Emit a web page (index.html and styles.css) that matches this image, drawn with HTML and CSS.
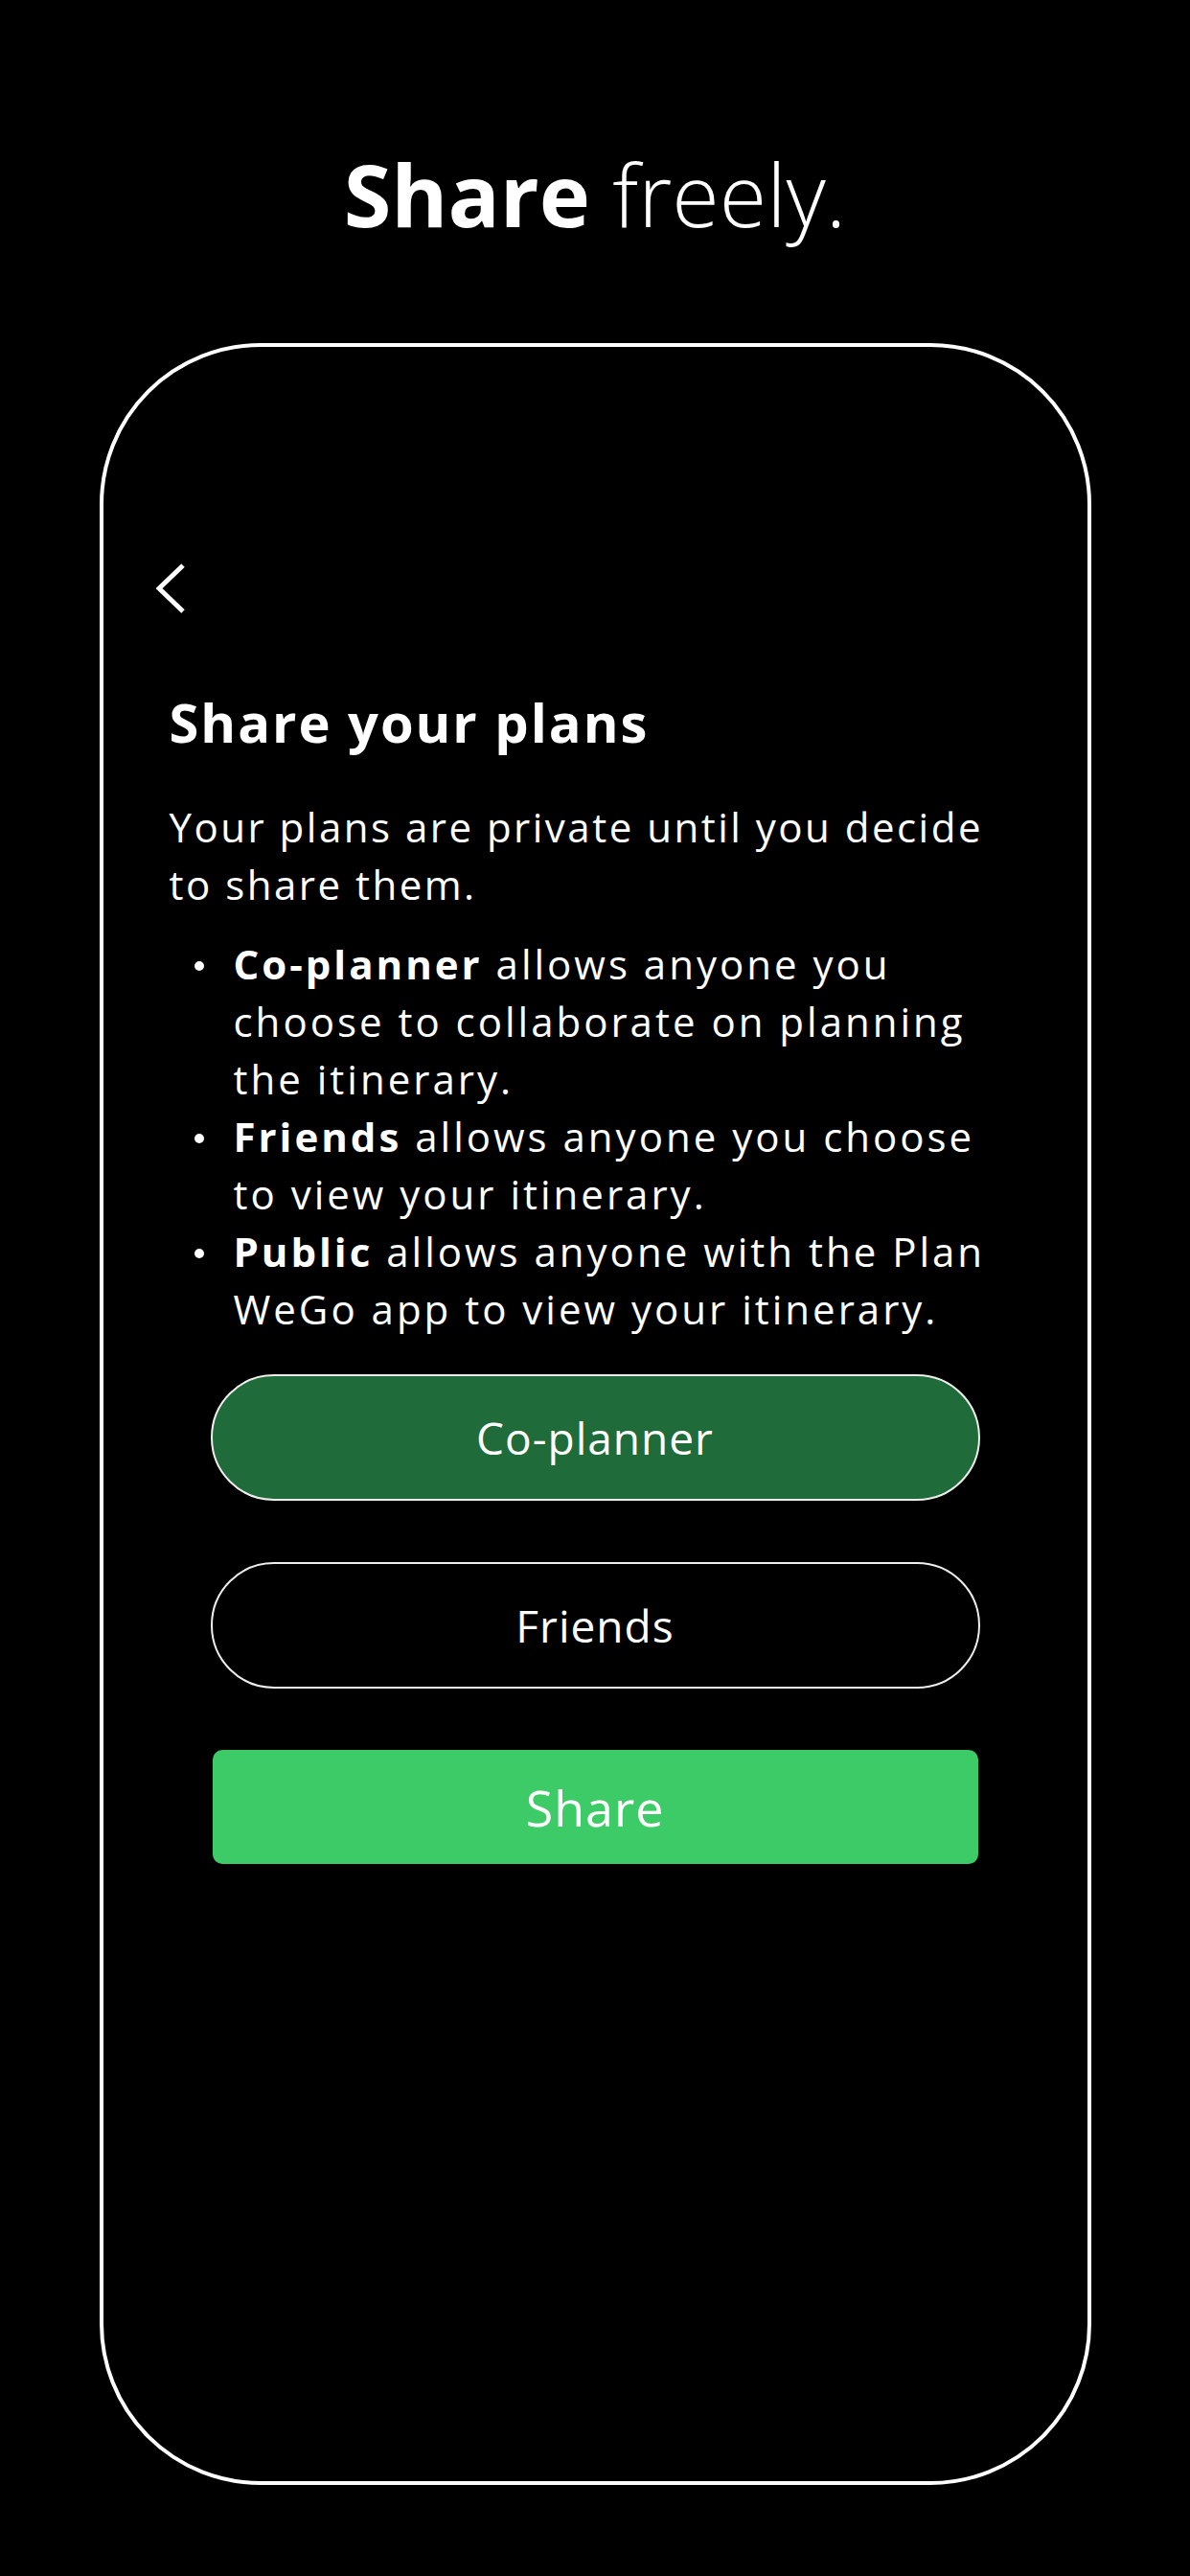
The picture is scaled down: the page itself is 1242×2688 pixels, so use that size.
FILE: index.html
```html
<!DOCTYPE html>
<html lang="en">
<head>
    <meta charset="UTF-8">
    <meta name="viewport" content="width=device-width, initial-scale=1.0">
    <title>Share freely</title>
    <link rel="stylesheet" href="styles.css">
</head>
<body>
    <h1 class="headline"><strong>Share</strong> freely.</h1>

    <div class="phone">
        <div class="screen">
            <button class="back" aria-label="Back">
                <svg width="30" height="52" viewBox="0 0 30 52">
                    <polyline points="28,2 3,26 28,50" fill="none" stroke="#fff" stroke-width="5"/>
                </svg>
            </button>

            <h2>Share your plans</h2>
            <p class="intro">Your plans are private until you decide to share them.</p>
            <ul class="modes">
                <li><strong>Co-planner</strong> allows anyone you choose to collaborate on planning the itinerary.</li>
                <li><strong>Friends</strong> allows anyone you choose to view your itinerary.</li>
                <li><strong>Public</strong> allows anyone with the Plan WeGo app to view your itinerary.</li>
            </ul>

            <div class="actions">
                <button class="option selected">Co-planner</button>
                <button class="option">Friends</button>
                <button class="share-btn">Share</button>
            </div>
        </div>
    </div>
</body>
</html>
```

FILE: styles.css
```css
body {
    margin: 0;
    background: #000;
    color: #fff;
    font-family: "Open Sans", "Noto Sans", sans-serif;
}
.headline {
    margin: 0;
    padding-top: 148px;
    font-size: 90px;
    line-height: 108px;
    font-weight: 300;
    text-align: center;
}
.headline strong { font-weight: 700; }

.phone {
    box-sizing: border-box;
    width: 1035px;
    height: 2235px;
    margin: 102px auto 0;
    border: 4px solid #fff;
    border-radius: 168px;
}
.screen {
    display: flex;
    flex-direction: column;
    padding: 226px 86px 0 69px;
}
.back {
    align-self: flex-start;
    margin-left: -14px;
    padding: 0;
    border: none;
    background: none;
    line-height: 0;
}
h2 {
    margin: 80px 0 0;
    font-size: 56px;
    line-height: 67px;
    font-weight: 700;
    letter-spacing: 2px;
}
.intro {
    margin: 46px 0 0;
    font-size: 42px;
    line-height: 60px;
    letter-spacing: 2.5px;
}
.modes {
    margin: 23px 0 0;
    padding: 0 0 0 67px;
    list-style: none;
    font-size: 42px;
    line-height: 60px;
    letter-spacing: 3px;
}
.modes li { position: relative; }
.modes li::before {
    content: "";
    position: absolute;
    left: -41px;
    top: 27px;
    width: 10px;
    height: 10px;
    border-radius: 50%;
    background: #fff;
}

/* buttons are centred in the whole frame, not the text column */
.actions {
    display: flex;
    flex-direction: column;
    align-items: center;
    margin: 38px -86px 0 -69px;
}
.option {
    width: 803px;
    height: 132px;
    margin-bottom: 64px;
    border: 2px solid #eee;
    border-radius: 66px;
    background: transparent;
    color: #fff;
    font-family: inherit;
    font-size: 46px;
    font-weight: 500;
    letter-spacing: 1px;
}
.option.selected { background: #1f6b39; }
.option:last-of-type { margin-bottom: 66px; }
.share-btn {
    width: 799px;
    height: 119px;
    border: none;
    border-radius: 10px;
    background: #3ccb66;
    color: #fff;
    font-family: inherit;
    font-size: 52px;
    font-weight: 500;
    letter-spacing: 1px;
}
```
